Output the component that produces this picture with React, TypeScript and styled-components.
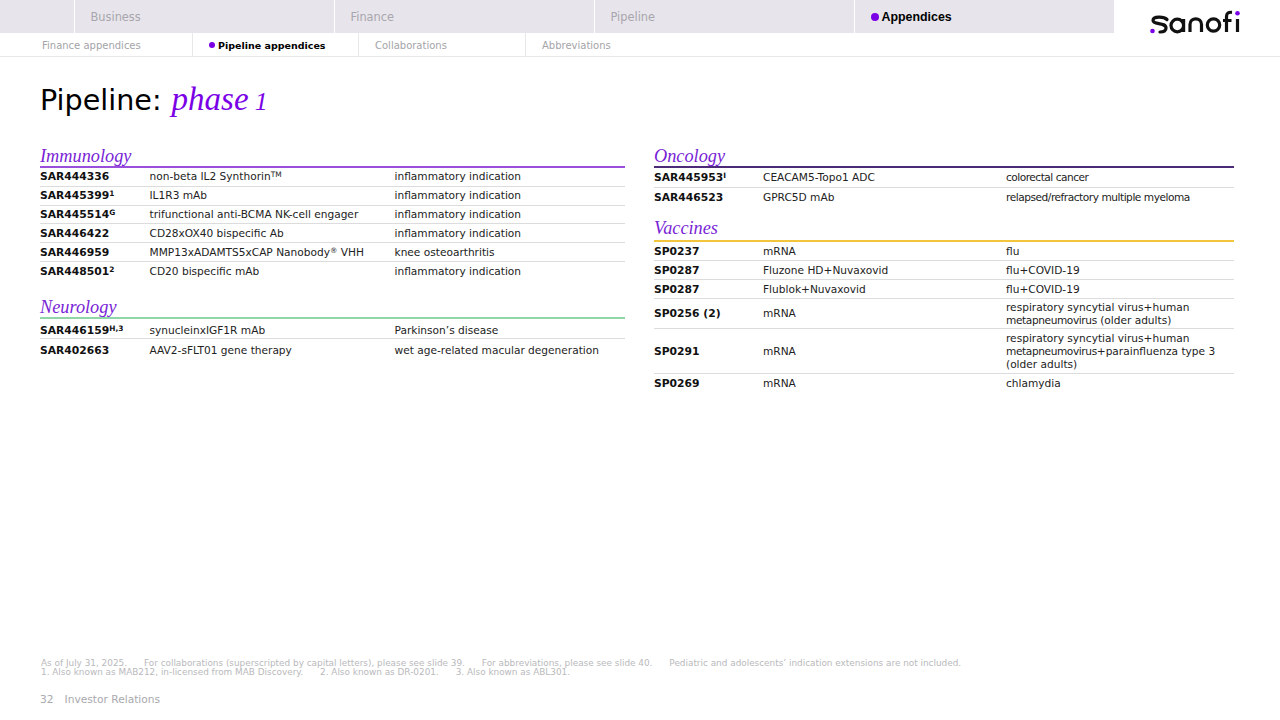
import React from 'react';
import styled, {createGlobalStyle} from 'styled-components';

const GlobalStyle = createGlobalStyle`
  html, body {
    margin: 0;
    padding: 0;
    background: #fff;
  }
  body {
    font-family: 'DejaVu Sans', Verdana, sans-serif;
    color: #111;
  }
`;

const Page = styled.div`
  display: flex;
  flex-direction: column;
  width: 1280px;
  height: 720px;
  overflow: hidden;
`;

const TopBar = styled.nav`
  display: flex;
  height: 33px;
  flex: none;
`;

const TopCell = styled.div<{$width: number}>`
  display: flex;
  align-items: center;
  gap: 3px;
  width: ${p => p.$width}px;
  margin-right: 1px;
  padding: 1px 0 0 15.5px;
  box-sizing: border-box;
  background: #e7e5eb;
  font-size: 11.4px;
  color: #a8a6ad;
`;

const ActiveLabel = styled.span`
  color: #000;
  font-family: 'Liberation Sans', Arial, sans-serif;
  font-weight: 700;
  font-size: 12.4px;
`;

const Dot = styled.i<{$size: number}>`
  display: block;
  width: ${p => p.$size}px;
  height: ${p => p.$size}px;
  border-radius: 50%;
  background: #7a00e6;
`;

const LogoWrap = styled.div`
  display: flex;
  flex: 1;
  justify-content: flex-end;
  padding: 10px 39px 0 0;
`;

const SubBar = styled.nav`
  display: flex;
  flex: none;
  height: 23px;
  border-bottom: 1px solid #e8e8ea;
`;

const SubCell = styled.div<{$width: number; $pad: number}>`
  display: flex;
  align-items: center;
  gap: 3px;
  width: ${p => p.$width}px;
  padding: 1px 0 0 ${p => p.$pad}px;
  box-sizing: border-box;
  border-right: 1px solid #e8e8ea;
  font-size: 10px;
  color: #a4a4a8;

  &:last-child {
    border-right: none;
  }
`;

const SubActive = styled.span`
  color: #000;
  font-weight: 700;
  font-size: 9.5px;
`;

const Title = styled.h1`
  display: flex;
  align-items: baseline;
  gap: 10px;
  flex: none;
  margin: 24px 0 0 40px;
  height: 36px;
  font-weight: 400;
  font-size: 28.6px;
  line-height: 36px;
  color: #000;
`;

const Phase = styled.em`
  font-family: 'Liberation Serif', 'Times New Roman', serif;
  font-size: 33px;
  word-spacing: -2px;
  color: #7a00e6;
`;

const PhaseNumber = styled.span`
  font-size: 26px;
`;

const Columns = styled.main`
  display: grid;
  grid-template-columns: 585px 580px;
  column-gap: 29px;
  padding: 28px 0 0 40px;
  flex: none;
`;

const Column = styled.div`
  display: flex;
  flex-direction: column;
`;

const Heading = styled.h2<{$line: string; $tall?: boolean}>`
  margin: 0;
  padding-top: 1px;
  height: ${p => (p.$tall ? 22 : 20)}px;
  border-bottom: 2px solid ${p => p.$line};
  font-family: 'Liberation Serif', 'Times New Roman', serif;
  font-style: italic;
  font-weight: 400;
  font-size: 18.3px;
  line-height: 20px;
  color: #7a1fd6;
`;

const Group = styled.section<{$gap?: number}>`
  margin-top: ${p => p.$gap ?? 0}px;
`;

const Row = styled.div<{$cols: string; $height: number; $pad?: number}>`
  display: grid;
  grid-template-columns: ${p => p.$cols};
  align-items: center;
  box-sizing: border-box;
  height: ${p => p.$height}px;
  padding-top: ${p => p.$pad ?? 0}px;
  border-bottom: 1px solid #dcdcde;
  font-size: 10.6px;
  line-height: 13px;
  color: #222;

  &:last-child {
    border-bottom: none;
  }
`;

const Code = styled.div`
  font-weight: 700;
  font-size: 10.75px;
  color: #111;
`;

const Mark = styled.sup`
  font-size: 7.4px;
  line-height: 0;
  vertical-align: 3.5px;
`;

const Tight = styled.span<{$spacing: number}>`
  letter-spacing: ${p => p.$spacing}px;
`;

const Footer = styled.footer`
  margin-top: auto;
  padding: 0 0 13px 41px;
  color: #b9b9bc;
`;

const Notes = styled.p`
  margin: 0 0 16px;
  font-size: 8.9px;
  line-height: 9px;
  white-space: pre;
`;

const PageLine = styled.div`
  display: flex;
  gap: 11px;
  margin-left: -1px;
  font-size: 10.65px;
  line-height: 14px;
  color: #a9a9ad;
`;

function SanofiLogo() {
  return (
    <svg width="91" height="24" viewBox="0 0 91 24" fill="none" stroke="#111" strokeWidth="3.2" aria-label="sanofi">
      <path d="M17 9.5 C14 6.5 3 6 3 10.5 C3 15 16 12 16 18 C16 21 13 22 10 22" strokeLinecap="round" />
      <path d="M21 15.5 A6.3 6.3 0 1 1 33.6 15.5 A6.3 6.3 0 1 1 21 15.5 M33.6 9 V22" />
      <path d="M40 22 V14.5 C40 7 51.5 7 51.5 14.5 V22" />
      <circle cx="63.5" cy="15" r="6.2" />
      <path d="M76.5 22 V6.5 C76.5 3 78.5 2 82 2.3 M73 10.5 H81.5" />
      <path d="M87.5 9 V22" />
      <circle cx="87.5" cy="3.3" r="2.3" fill="#7a00e6" stroke="none" />
      <circle cx="2.5" cy="21" r="2.3" fill="#7a00e6" stroke="none" />
    </svg>
  );
}

type Item = {code: string; sup?: string; what: React.ReactNode; use: React.ReactNode; height: number; pad?: number};

const leftCols = '109.5px 245px 1fr';
const rightCols = '109px 243px 1fr';

const immunology: Item[] = [
  {code: 'SAR444336', what: <>non-beta IL2 Synthorin<Mark>TM</Mark></>, use: 'inflammatory indication', height: 18.8},
  {code: 'SAR445399', sup: '1', what: 'IL1R3 mAb', use: 'inflammatory indication', height: 18.8},
  {code: 'SAR445514', sup: 'G', what: 'trifunctional anti-BCMA NK-cell engager', use: 'inflammatory indication', height: 18.8},
  {code: 'SAR446422', what: 'CD28xOX40 bispecific Ab', use: 'inflammatory indication', height: 18.8},
  {code: 'SAR446959', what: <>MMP13xADAMTS5xCAP Nanobody<Mark>®</Mark> VHH</>, use: 'knee osteoarthritis', height: 18.8},
  {code: 'SAR448501', sup: '2', what: 'CD20 bispecific mAb', use: 'inflammatory indication', height: 18.8},
];

const neurology: Item[] = [
  {code: 'SAR446159', sup: 'H,3', what: 'synucleinxIGF1R mAb', use: 'Parkinson’s disease', height: 20, pad: 5},
  {code: 'SAR402663', what: 'AAV2-sFLT01 gene therapy', use: 'wet age-related macular degeneration', height: 24},
];

const oncology: Item[] = [
  {code: 'SAR445953', sup: 'I', what: 'CEACAM5-Topo1 ADC', use: <Tight $spacing={-0.5}>colorectal cancer</Tight>, height: 19.5},
  {code: 'SAR446523', what: 'GPRC5D mAb', use: <Tight $spacing={-0.47}>relapsed/refractory multiple myeloma</Tight>, height: 19.5},
];

const vaccines: Item[] = [
  {code: 'SP0237', what: 'mRNA', use: 'flu', height: 19},
  {code: 'SP0287', what: 'Fluzone HD+Nuvaxovid', use: 'flu+COVID-19', height: 19},
  {code: 'SP0287', what: 'Flublok+Nuvaxovid', use: 'flu+COVID-19', height: 19},
  {code: 'SP0256 (2)', what: 'mRNA', use: <>respiratory syncytial virus+human<br /><Tight $spacing={-0.4}>metapneumovirus</Tight> (older adults)</>, height: 30},
  {code: 'SP0291', what: 'mRNA', use: <>respiratory syncytial virus+human<br /><Tight $spacing={-0.4}>metapneumovirus</Tight>+parainfluenza type 3<br />(older adults)</>, height: 45},
  {code: 'SP0269', what: 'mRNA', use: 'chlamydia', height: 18.5},
];

function Rows({items, cols}: {items: Item[]; cols: string}) {
  return (
    <>
      {items.map((item, i) => (
        <Row key={i} $cols={cols} $height={item.height} $pad={item.pad}>
          <Code>
            {item.code}
            {item.sup && <Mark>{item.sup}</Mark>}
          </Code>
          <div>{item.what}</div>
          <div>{item.use}</div>
        </Row>
      ))}
    </>
  );
}

export default function App() {
  return (
    <Page>
      <GlobalStyle />
      <TopBar>
        <TopCell $width={74} />
        <TopCell $width={259}>Business</TopCell>
        <TopCell $width={259}>Finance</TopCell>
        <TopCell $width={259}>Pipeline</TopCell>
        <TopCell $width={259}>
          <Dot $size={8} />
          <ActiveLabel>Appendices</ActiveLabel>
        </TopCell>
        <LogoWrap>
          <SanofiLogo />
        </LogoWrap>
      </TopBar>
      <SubBar>
        <SubCell $width={193} $pad={42}>Finance appendices</SubCell>
        <SubCell $width={166} $pad={16}>
          <Dot $size={6} />
          <SubActive>Pipeline appendices</SubActive>
        </SubCell>
        <SubCell $width={167} $pad={16}>Collaborations</SubCell>
        <SubCell $width={200} $pad={16}>Abbreviations</SubCell>
      </SubBar>
      <Title>
        Pipeline: <Phase>phase <PhaseNumber>1</PhaseNumber></Phase>
      </Title>
      <Columns>
        <Column>
          <Group>
            <Heading $line="#9a4fdc">Immunology</Heading>
            <Rows items={immunology} cols={leftCols} />
          </Group>
          <Group $gap={15.2}>
            <Heading $line="#8fd6a8">Neurology</Heading>
            <Rows items={neurology} cols={leftCols} />
          </Group>
        </Column>
        <Column>
          <Group>
            <Heading $line="#4b2a78">Oncology</Heading>
            <Rows items={oncology} cols={rightCols} />
          </Group>
          <Group $gap={10}>
            <Heading $line="#f2c53d" $tall>Vaccines</Heading>
            <Rows items={vaccines} cols={rightCols} />
          </Group>
        </Column>
      </Columns>
      <Footer>
        <Notes>
          {'As of July 31, 2025.      For collaborations (superscripted by capital letters), please see slide 39.      For abbreviations, please see slide 40.      Pediatric and adolescents’ indication extensions are not included.\n1. Also known as MAB212, in-licensed from MAB Discovery.      2. Also known as DR-0201.      3. Also known as ABL301.'}
        </Notes>
        <PageLine>
          <span>32</span>
          <span>Investor Relations</span>
        </PageLine>
      </Footer>
    </Page>
  );
}
